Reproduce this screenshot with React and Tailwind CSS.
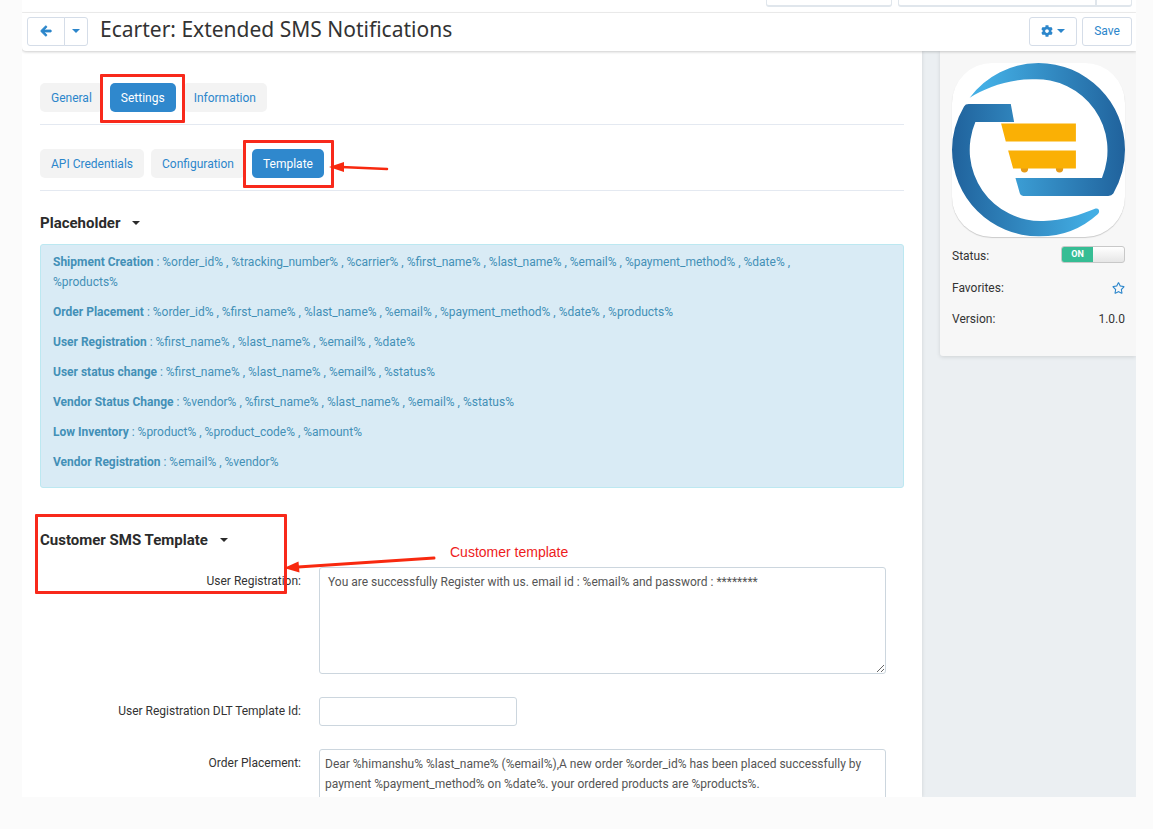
import React, { useState } from 'react';
import { FaArrowLeft, FaCog, FaRegStar } from 'react-icons/fa';

const mainTabs = ['General', 'Settings', 'Information'];
const settingTabs = ['API Credentials', 'Configuration', 'Template'];

const placeholders = [
  {
    name: 'Shipment Creation',
    vars: '%order_id% , %tracking_number% , %carrier% , %first_name% , %last_name% , %email% , %payment_method% , %date% , %products%'
  },
  {
    name: 'Order Placement',
    vars: '%order_id% , %first_name% , %last_name% , %email% , %payment_method% , %date% , %products%'
  },
  { name: 'User Registration', vars: '%first_name% , %last_name% , %email% , %date%' },
  { name: 'User status change', vars: '%first_name% , %last_name% , %email% , %status%' },
  { name: 'Vendor Status Change', vars: '%vendor% , %first_name% , %last_name% , %email% , %status%' },
  { name: 'Low Inventory', vars: '%product% , %product_code% , %amount%' },
  { name: 'Vendor Registration', vars: '%email% , %vendor%' }
];

const Caret = () => (
  <svg viewBox="0 0 8 4" className="w-2 h-1" fill="currentColor" aria-hidden="true">
    <path d="M0 0h8L4 4z" />
  </svg>
);

const Logo = () => (
  <svg viewBox="0 0 518 520" className="block w-full" role="img" aria-label="Ecarter logo">
    <defs>
      <linearGradient id="upper" gradientUnits="userSpaceOnUse" x1="53" y1="0" x2="518" y2="0">
        <stop offset="0.1" stopColor="#43aee4" />
        <stop offset="1" stopColor="#20629c" />
      </linearGradient>
      <linearGradient id="lower" gradientUnits="userSpaceOnUse" x1="0" y1="0" x2="440" y2="0">
        <stop offset="0" stopColor="#20629c" />
        <stop offset="0.95" stopColor="#43aee4" />
      </linearGradient>
    </defs>
    <path
      fill="url(#upper)"
      d="M53 104A259 259 0 0 1 259 0A259 260 0 0 1 518 260Q518 330 483 391Q478 398 468 398H213Q205 398 203 390L190 344H449A213 213 0 0 0 240 49C165 49 100 75 53 104z"
    />
    <path
      fill="url(#lower)"
      d="M437 452A259 259 0 0 1 259 519A259 259 0 0 1 0 260Q0 192 36 130Q40 123 50 123H176L186 177H70A213 213 0 0 0 275 473C330 473 385 455 430 436C440 433 444 445 437 452z"
    />
    <circle cx="217" cy="317" r="11" fill="#e59a16" />
    <circle cx="322" cy="317" r="11" fill="#e59a16" />
    <path fill="#fab005" d="M147 181h224v54H161zM168 262h203v54H183z" />
  </svg>
);

// Red frame drawn round a control or a section
const Frame = ({ className }) => (
  <span className={`absolute border-3 border-[#f8291b] rounded-[1px] pointer-events-none ${className}`} />
);

const Tabs = ({ items, active, onSelect, children }) => (
  <nav className="flex gap-[7px] pb-3 border-b border-[#e4e9f1]">
    {items.map((item) => (
      <div key={item} className={`relative ${item === active ? 'z-1' : ''}`}>
        <button
          onClick={() => onSelect(item)}
          className={`h-[29px] px-[11px] rounded-[5px] ${item === active ? 'bg-[#2f88cd] text-white' : 'bg-[#f3f3f3] text-[#2c86cb]'
            }`}
        >
          {item}
        </button>
        {item === active && children}
      </div>
    ))}
  </nav>
);

const SectionTitle = ({ children }) => (
  <h4 className="text-[15px] leading-6 font-bold text-[#2b2b2b]">
    <button className="flex items-center gap-3">
      {children}
      <Caret />
    </button>
  </h4>
);

const Field = ({ id, label, children }) => (
  <div className="flex gap-[18px] pr-[18px]">
    <label htmlFor={id} className="w-[261px] shrink-0 pt-1 text-right">
      {label}:
    </label>
    {children}
  </div>
);

const inputStyle = 'border border-[#ccd6de] rounded-[3px] bg-white text-[#555]';
const buttonStyle = 'flex items-center justify-center h-[29px] border border-[#d5dde8] bg-white text-[#2c86cb]';

const App = () => {
  const [tab, setTab] = useState('Settings');
  const [subTab, setSubTab] = useState('Template');
  const [enabled, setEnabled] = useState(true);

  return (
    <div className="h-screen pl-[22px] pr-[17px] pb-8 bg-[#fbfbfb] font-[Roboto,sans-serif] text-[12px] leading-5 text-[#333]">
      <div className="h-full flex flex-col overflow-hidden bg-white">
        {/* Bottom edge of the search bar */}
        <div className="shrink-0 flex justify-end items-start gap-[6px] h-[13px] pr-1 border-b border-[#f0f0f0]">
          <div className="w-[126px] h-[7px] border border-t-0 border-b-2 border-[#e0e6ec] rounded-b-[3px]" />
          <div className="flex w-[234px] h-[7px] border border-t-0 border-b-2 border-[#e0e6ec] rounded-b-[3px]">
            <div className="flex-1 border-r-2 border-[#e0e6ec]" />
            <div className="w-[34px]" />
          </div>
        </div>

        <header className="relative z-10 shrink-0 flex items-center h-[38px] pl-[5px] pr-1 pb-[2px] bg-white rounded-bl-[4px] shadow-[0_1px_3px_rgba(0,0,0,0.2)]">
          <button className={`${buttonStyle} w-[38px] rounded-l-[3px]`} aria-label="Back">
            <FaArrowLeft className="w-3 h-3" stroke="currentColor" strokeWidth="40" />
          </button>
          <button className={`${buttonStyle} w-6 -ml-px rounded-r-[3px]`} aria-label="Back history">
            <Caret />
          </button>
          <h1 className="ml-3 pb-1 font-['Noto_Sans',sans-serif] text-[21px] leading-7 text-[#333]">
            Ecarter: Extended SMS Notifications
          </h1>
          <div className="flex gap-[5px] ml-auto">
            <button className={`${buttonStyle} gap-1 w-12 rounded-[3px]`} aria-label="Tools">
              <FaCog className="w-3 h-3" />
              <Caret />
            </button>
            <button className={`${buttonStyle} w-[50px] rounded-[3px]`}>Save</button>
          </div>
        </header>

        <div className="flex flex-1 min-h-0">
          <main className="relative z-1 flex-1 px-[18px] pt-8 bg-white shadow-[1px_0_3px_rgba(0,0,0,0.08)]">
            <Tabs items={mainTabs} active={tab} onSelect={setTab}>
              <Frame className="-left-[10px] -right-[9px] -top-[9px] -bottom-[11px]" />
            </Tabs>

            <div className="mt-6">
              <Tabs items={settingTabs} active={subTab} onSelect={setSubTab}>
                <Frame className="-left-[9px] -right-[10px] -top-[9px] -bottom-[10px]" />
                <svg viewBox="0 0 60 12" className="absolute left-full top-3 ml-[5px] w-[60px] h-3 max-w-none" aria-hidden="true">
                  <path d="M12 6L58 8" stroke="#f8290f" strokeWidth="2.5" strokeLinecap="round" />
                  <path d="M0 6L15 1V11z" fill="#f8290f" />
                </svg>
              </Tabs>
            </div>

            <section className="mt-5">
              <SectionTitle>Placeholder</SectionTitle>
              <div className="mt-[9px] pl-3 pr-12 pt-[7px] pb-[15px] flex flex-col gap-[10px] rounded-[3px] border border-[#bce8f1] bg-[#d9ebf5] text-[#4390b7]">
                {placeholders.map(({ name, vars }) => (
                  <p key={name}>
                    <strong className="font-bold">{name}</strong> : {vars}
                  </p>
                ))}
              </div>
            </section>

            <section className="relative mt-10">
              <SectionTitle>Customer SMS Template</SectionTitle>
              <div className="mt-[15px] flex flex-col gap-[23px]">
                <Field id="user-registration" label="User Registration">
                  <textarea
                    id="user-registration"
                    className={`${inputStyle} flex-1 h-[107px] px-2 py-1 resize`}
                    defaultValue="You are successfully Register with us. email id : %email% and password : ********"
                  />
                </Field>
                <Field id="dlt-template-id" label="User Registration DLT Template Id">
                  <input id="dlt-template-id" type="text" className={`${inputStyle} w-[198px] h-[29px] px-[5px]`} />
                </Field>
                <Field id="order-placement" label="Order Placement">
                  <textarea
                    id="order-placement"
                    className={`${inputStyle} flex-1 h-[107px] px-[5px] py-1 resize`}
                    defaultValue="Dear %himanshu% %last_name% (%email%),A new order %order_id% has been placed successfully by payment %payment_method% on %date%. your ordered products are %products%."
                  />
                </Field>
              </div>

              {/* Callout for this section */}
              <Frame className="-left-[5px] -top-[14px] w-[252px] h-20" />
              <svg viewBox="0 0 152 20" className="absolute left-[244px] top-[26px] w-[152px] h-5" aria-hidden="true">
                <path d="M14 13L150 4" stroke="#f8290f" strokeWidth="3" strokeLinecap="round" />
                <path d="M0 14L14.500 7.500L15.500 18.500z" fill="#f8290f" />
              </svg>
              <p className="absolute left-[410px] top-[14px] font-['Liberation_Sans',sans-serif] text-[14px] text-[#ee1c1c]">
                Customer template
              </p>
            </section>
          </main>

          <aside className="w-[214px] shrink-0 pl-[18px] bg-[#ebeff2]">
            <div className="pl-3 pr-[11px] pt-3 pb-[27px] rounded-bl-[3px] bg-[#f7f7f7] shadow-[0_1px_4px_rgba(0,0,0,0.12)]">
              <div className="overflow-hidden rounded-[40px] bg-white shadow-[0_1px_1px_rgba(0,0,0,0.18)]">
                <Logo />
              </div>
              <div className="flex justify-between mt-[9px]">
                <span id="status">Status:</span>
                <label className="flex w-16 h-[17px] overflow-hidden rounded-[3px] border border-[#c8c8c8] bg-linear-to-b from-white to-[#e6e6e6]">
                  <input
                    type="checkbox"
                    aria-labelledby="status"
                    className="sr-only"
                    checked={enabled}
                    onChange={() => setEnabled(!enabled)}
                  />
                  {enabled && (
                    <span className="w-[31px] bg-[#36bd94] text-center text-[9px] leading-[15px] font-bold text-white">ON</span>
                  )}
                </label>
              </div>
              <div className="flex justify-between items-center mt-3">
                <span>Favorites:</span>
                <button className="text-[#2c86cb]" aria-label="Add to favorites">
                  <FaRegStar className="w-[13px] h-3" />
                </button>
              </div>
              <div className="flex justify-between mt-[11px]">
                <span>Version:</span>
                <span>1.0.0</span>
              </div>
            </div>
          </aside>
        </div>
      </div>
    </div>
  );
};

export default App;
